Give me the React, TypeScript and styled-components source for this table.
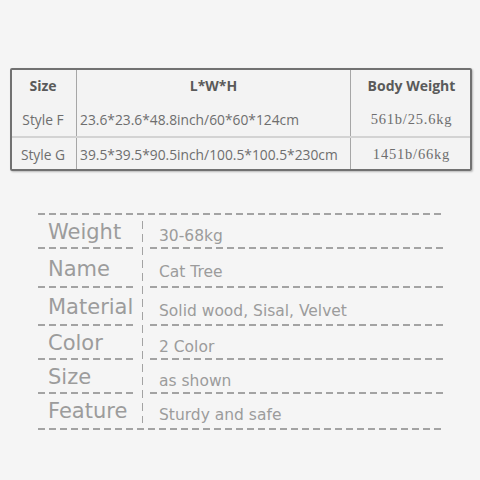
import React from 'react';
import styled, { createGlobalStyle } from 'styled-components';

const GlobalStyle = createGlobalStyle`
   html, body {
      margin: 0;
      padding: 0;
      background: #f5f5f5;
   }
`;

const Page = styled.div`
   width: 480px;
   height: 480px;
   box-sizing: border-box;
   padding: 68px 10px 0;
   background: #f5f5f5;
`;

const SizeTable = styled.table`
   width: 460px;
   border-collapse: collapse;
   background: #f3f3f3;
   outline: 2px solid #717171;
   outline-offset: -2px;
   box-shadow: 1px 1px 2px rgba(0, 0, 0, 0.25);
   border-radius: 2px;
   font-family: 'Open Sans', 'Noto Sans', sans-serif;
   table-layout: fixed;
`;

const Row = styled.tr<{ $height: number }>`
   height: ${(p) => p.$height}px;
   & + & > * {
      border-top: 2px solid #d3d3d3;
   }
`;

const HeadCell = styled.th<{ $width: number }>`
   width: ${(p) => p.$width}px;
   padding: 0;
   font-size: 14px;
   font-weight: 700;
   color: #5a5a5a;
   text-align: center;
   vertical-align: middle;
   & + & {
      border-left: 1px solid #a6a6a6;
   }
`;

const Cell = styled.td<{ $align?: 'left' | 'center'; $serif?: boolean }>`
   padding: 0 0 0 ${(p) => (p.$align === 'left' ? 3 : 0)}px;
   font-size: 13.8px;
   color: #6e6e6e;
   text-align: ${(p) => p.$align ?? 'center'};
   vertical-align: middle;
   white-space: nowrap;
   ${(p) =>
      p.$serif &&
      `
      font-family: 'Liberation Serif', serif;
      font-size: 14.5px;
      letter-spacing: 0.8px;
   `}
   & + & {
      border-left: 1px solid #a6a6a6;
   }
`;

const dashH = 'repeating-linear-gradient(to right, #a3a3a3 0 7px, transparent 7px 11px)';
const dashV = 'repeating-linear-gradient(to bottom, #a3a3a3 0 8px, transparent 8px 13px)';

const Spec = styled.div`
   display: grid;
   grid-template-columns: 97px 15px 1fr;
   grid-template-rows: 34px 39px 38px 34px 34px 34px;
   width: 405px;
   margin: 42px 0 0 28px;
   padding: 2px 0;
   background: ${dashH} top left / 100% 2px no-repeat, ${dashH} bottom left / 100% 2px no-repeat;
   font-family: 'DejaVu Sans', Verdana, sans-serif;
   color: #9c9c9c;
`;

const Label = styled.div<{ $row: number; $last?: boolean }>`
   grid-column: 1;
   grid-row: ${(p) => p.$row};
   display: flex;
   align-items: center;
   padding: 0 0 0 10px;
   font-size: 21px;
   white-space: nowrap;
   background: ${(p) => (p.$last ? 'none' : `${dashH} bottom left / 100% 2px no-repeat`)};
`;

const Value = styled.div<{ $row: number; $last?: boolean }>`
   grid-column: 3;
   grid-row: ${(p) => p.$row};
   display: flex;
   align-items: center;
   padding: 7px 0 0 9px;
   font-size: 15.5px;
   white-space: nowrap;
   background: ${(p) => (p.$last ? 'none' : `${dashH} bottom left / 100% 2px no-repeat`)};
`;

const Divider = styled.div`
   grid-column: 2;
   grid-row: 1 / -1;
   justify-self: center;
   width: 1.5px;
   margin: 6px 0 5px;
   background: ${dashV};
`;

const sizes = [
   { name: 'Style F', dims: '23.6*23.6*48.8inch/60*60*124cm', weight: '561b/25.6kg' },
   { name: 'Style G', dims: '39.5*39.5*90.5inch/100.5*100.5*230cm', weight: '1451b/66kg' },
];

const specs = [
   ['Weight', '30-68kg'],
   ['Name', 'Cat Tree'],
   ['Material', 'Solid wood, Sisal, Velvet'],
   ['Color', '2 Color'],
   ['Size', 'as shown'],
   ['Feature', 'Sturdy and safe'],
];

export default function App() {
   return (
      <Page>
         <GlobalStyle />
         <SizeTable>
            <thead>
               <Row $height={35}>
                  <HeadCell $width={66}>Size</HeadCell>
                  <HeadCell $width={273}>L*W*H</HeadCell>
                  <HeadCell $width={121}>Body Weight</HeadCell>
               </Row>
            </thead>
            <tbody>
               {sizes.map((s) => (
                  <Row key={s.name} $height={34}>
                     <Cell>{s.name}</Cell>
                     <Cell $align="left">{s.dims}</Cell>
                     <Cell $serif>{s.weight}</Cell>
                  </Row>
               ))}
            </tbody>
         </SizeTable>
         <Spec>
            {specs.map(([label, value], i) => (
               <React.Fragment key={label}>
                  <Label $row={i + 1} $last={i === specs.length - 1}>
                     {label}
                  </Label>
                  <Value $row={i + 1} $last={i === specs.length - 1}>
                     {value}
                  </Value>
               </React.Fragment>
            ))}
            <Divider />
         </Spec>
      </Page>
   );
}
